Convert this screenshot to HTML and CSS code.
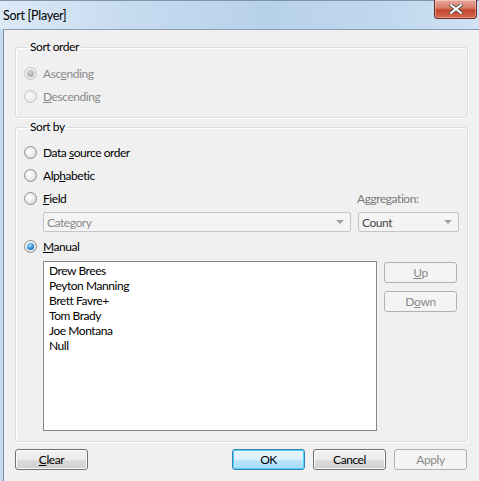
FILE: index.html
```html
<!DOCTYPE html>
<html>
<head>
<meta charset="utf-8">
<link rel="stylesheet" href="styles.css">
</head>
<body>
<div class="window">
  <div class="titlebar">
    <span class="title">Sort [Player]</span>
    <span class="close"><svg width="14" height="10" viewBox="0 0 14 10"><path d="M2 1 L12 9 M12 1 L2 9" stroke="#4a4a4a" stroke-width="3.6" stroke-linecap="square"/><path d="M2 1 L12 9 M12 1 L2 9" stroke="#fff" stroke-width="2" stroke-linecap="square"/></svg></span>
  </div>
  <div class="client">
    <fieldset class="group group-order">
      <legend>Sort order</legend>
      <div class="row disabled"><span class="radio checked"></span><span>Asc<u>e</u>nding</span></div>
      <div class="row disabled"><span class="radio"></span><span><u>D</u>escending</span></div>
    </fieldset>
    <fieldset class="group group-by">
      <legend>Sort by</legend>
      <div class="row"><span class="radio"></span><span>Data <u>s</u>ource order</span></div>
      <div class="row"><span class="radio"></span><span>Alp<u>h</u>abetic</span></div>
      <div class="row row-field">
        <span class="radio"></span><span class="field-label"><u>F</u>ield</span>
        <span class="agg-label">Ag<u>g</u>regation:</span>
      </div>
      <div class="combos">
        <div class="combo combo-cat"><span>Category</span><span class="arrow"></span></div>
        <div class="combo combo-count"><span>Count</span><span class="arrow"></span></div>
      </div>
      <div class="row row-manual"><span class="radio checked active"></span><span><u>M</u>anual</span></div>
      <div class="manual">
        <div class="listbox">
          <div class="item">Drew Brees</div>
          <div class="item">Peyton Manning</div>
          <div class="item">Brett Favre+</div>
          <div class="item">Tom Brady</div>
          <div class="item">Joe Montana</div>
          <div class="item">Null</div>
        </div>
        <div class="side">
          <div class="btn disabled"><u>U</u>p</div>
          <div class="btn disabled">D<u>o</u>wn</div>
        </div>
      </div>
    </fieldset>
    <div class="footer">
      <div class="btn"><u>C</u>lear</div>
      <div class="spacer"></div>
      <div class="btn default">OK</div>
      <div class="btn">Cancel</div>
      <div class="btn disabled">Apply</div>
    </div>
  </div>
</div>
</body>
</html>
```

FILE: styles.css
```css
html, body {
  margin: 0;
  padding: 0;
}
body {
  width: 479px;
  height: 481px;
  overflow: hidden;
  font-family: Lato, "Noto Sans", sans-serif;
  font-size: 12px;
  letter-spacing: -0.45px;
  color: #000;
}
.window {
  width: 479px;
  height: 481px;
  display: flex;
  flex-direction: column;
  background: linear-gradient(to right, #c6daf0, #b9d2ec 60%, #c3d8ef);
}
.titlebar {
  height: 29px;
  flex: none;
  display: flex;
  justify-content: space-between;
  align-items: flex-start;
  background: linear-gradient(to right, #dce9f6 0%, #c8dcf0 25%, #b8d1eb 55%, #c0d7ee 80%, #d0e2f3 100%);
  border-top: 1px solid #7f95ad;
  box-sizing: border-box;
}
.title {
  margin: 7px 0 0 3px;
  font-size: 12.5px;
  letter-spacing: -0.3px;
  line-height: 16px;
  color: #000;
}
.close {
  width: 43px;
  height: 19px;
  margin: -1px 2px 0 0;
  box-sizing: border-box;
  border: 1px solid #6b2a22;
  border-top: none;
  border-radius: 0 0 4px 4px;
  background: linear-gradient(to bottom, #e9a99a 0%, #d77a66 45%, #c4452d 55%, #d6664b 100%);
  box-shadow: inset 0 0 0 1px rgba(255,255,255,0.35);
  display: flex;
  align-items: center;
  justify-content: center;
}
.client {
  flex: 1;
  margin-left: 3px;
  background: #f0f0f0;
  border-left: 1px solid #8090a4;
  border-top: 1px solid #8a9db2;
  padding: 10px 0 0 11px;
  display: flex;
  flex-direction: column;
}
.group {
  width: 453px;
  box-sizing: border-box;
  margin: 0;
  border: 1px solid #d5dfe5;
  border-radius: 3px;
  box-shadow: inset 1px 1px 0 #fff, 1px 1px 0 #fff;
  padding: 0 8px 0 8px;
}
.group legend {
  padding: 0 2px;
  margin-left: 4px;
  line-height: 14px;
  color: #000;
}
.group-order {
  padding-top: 8px;
  padding-bottom: 9px;
}
.group-by {
  margin-top: 2px;
  padding-top: 7px;
  padding-bottom: 10px;
}
.row {
  height: 23px;
  display: flex;
  align-items: center;
}
.row.disabled {
  color: #8a8a8a;
}
.radio {
  width: 13px;
  height: 13px;
  box-sizing: border-box;
  border-radius: 50%;
  border: 1px solid #8e8f8f;
  background: radial-gradient(circle at 40% 40%, #ffffff 0%, #f4f4f4 30%, #cfcfcf 100%);
  margin-right: 6px;
  position: relative;
  flex: none;
}
.row.disabled .radio {
  border-color: #c4c4c4;
  background: radial-gradient(circle at 40% 40%, #fbfbfb 0%, #f0f0f0 40%, #dedede 100%);
}
.radio.checked::after {
  content: "";
  position: absolute;
  left: 2px;
  top: 2px;
  width: 7px;
  height: 7px;
  border-radius: 50%;
  background: radial-gradient(circle at 40% 35%, #d6d6d6, #979797);
}
.radio.checked.active::after {
  background: radial-gradient(circle at 40% 35%, #a8e4fc 0%, #2a8ad4 55%, #13476f 100%);
}
.row-field .field-label {
  flex: 1;
}
.agg-label {
  width: 102px;
  color: #7a7a7a;
}
.combos {
  margin-top: 2px;
  margin-left: 19px;
  display: flex;
  gap: 7px;
}
.combo {
  height: 20px;
  box-sizing: border-box;
  border: 1px solid #c2c4c6;
  border-radius: 2px;
  background: #f4f4f4;
  display: flex;
  align-items: center;
  justify-content: space-between;
  padding: 0 6px 0 3px;
}
.combo-cat {
  width: 308px;
  color: #8a8a8a;
}
.combo-count {
  width: 101px;
  color: #4a4a4a;
}
.arrow {
  width: 0;
  height: 0;
  border-left: 4px solid transparent;
  border-right: 4px solid transparent;
  border-top: 4px solid #a0a0a0;
}
.row-manual {
  margin-top: 3px;
}
.manual {
  margin-top: 3px;
  margin-left: 19px;
  display: flex;
  gap: 7px;
}
.listbox {
  width: 334px;
  height: 170px;
  box-sizing: border-box;
  border: 1px solid #828790;
  background: #fff;
  padding: 1px 0 0 5px;
}
.item {
  height: 15px;
  line-height: 15px;
}
.side {
  margin-top: 1px;
  display: flex;
  flex-direction: column;
  gap: 8px;
}
.btn {
  width: 73px;
  height: 21px;
  box-sizing: border-box;
  border: 1px solid #707070;
  border-radius: 3px;
  background: linear-gradient(to bottom, #f2f2f2 0%, #ebebeb 50%, #dddddd 51%, #cfcfcf 100%);
  box-shadow: inset 0 0 0 1px #fcfcfc;
  display: flex;
  align-items: center;
  justify-content: center;
  color: #000;
}
.btn.disabled {
  border-color: #adb2b5;
  background: #f4f4f4;
  box-shadow: none;
  color: #8a8a8a;
}
.btn.default {
  border-color: #3c7fb1;
  background: linear-gradient(to bottom, #eaf6fd 0%, #d9f0fc 50%, #bee6fd 51%, #a7d9f5 100%);
  box-shadow: inset 0 0 0 1px #48d8fb;
}
.footer {
  margin-top: 7px;
  width: 452px;
  display: flex;
  gap: 8px;
}
.spacer {
  flex: 1;
}
```
